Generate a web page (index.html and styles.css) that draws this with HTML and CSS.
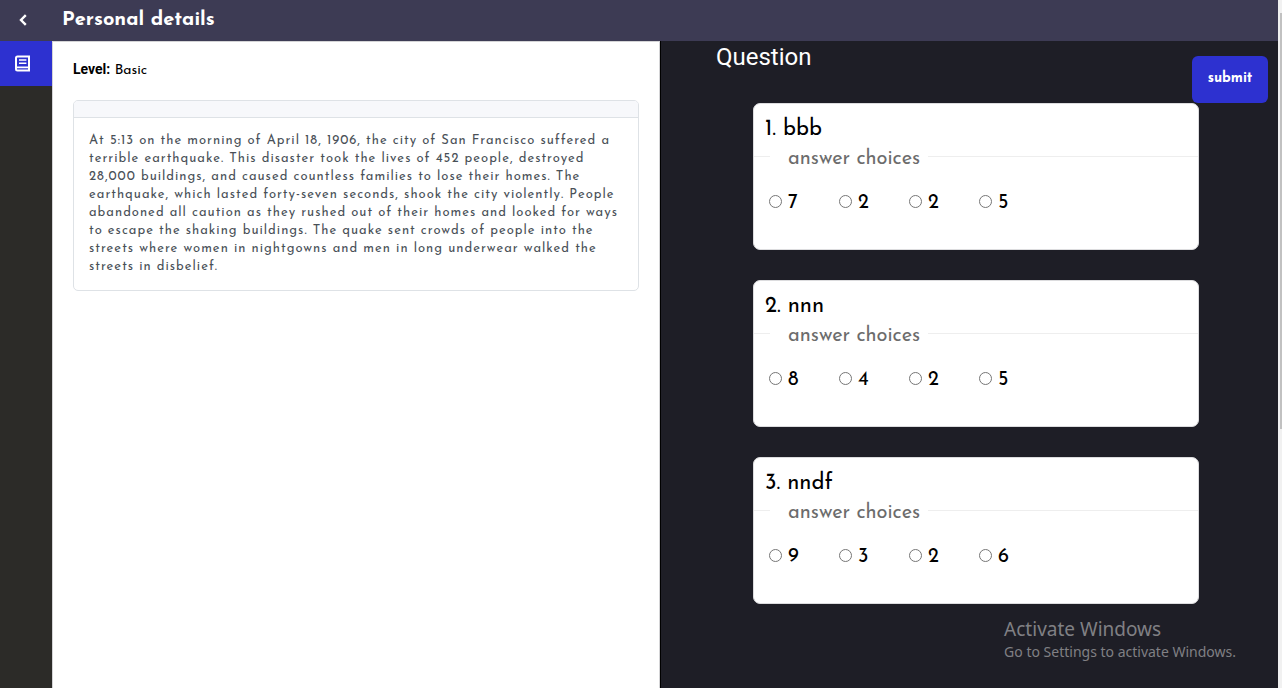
FILE: index.html
```html
<!DOCTYPE html>
<html lang="en">
<head>
<meta charset="utf-8">
<title>Personal details</title>
<link rel="stylesheet" href="styles.css">
</head>
<body>
<div class="window">
  <div class="app">
    <header class="topbar">
      <button class="back" type="button" aria-label="Back">
        <svg width="10" height="12" viewBox="0 0 10 12" fill="none" stroke="currentColor" stroke-width="2.4"><path d="M7.8 1.2 3 6l4.8 4.8"/></svg>
      </button>
      <h1 class="page-title">Personal details</h1>
    </header>
    <div class="content">
      <nav class="sidebar">
        <a class="nav-item" href="#" aria-label="Passage">
          <svg width="15" height="17" viewBox="0 0 15 17" fill="none" stroke="currentColor"><path stroke-width="2" d="M2.5 1.5H14v14H2.5q-1.5 0-1.5-1.5V3q0-1.5 1.5-1.5z"/><path stroke-width="1.6" d="M1.4 12.4H14M4 5h7.4M4 8.2h7.4"/></svg>
        </a>
      </nav>
      <main class="passage">
        <p class="level"><strong>Level:</strong> Basic</p>
        <article class="card">
          <div class="card-header"></div>
          <p class="card-text">At 5:13 on the morning of April 18, 1906, the city of San Francisco suffered a terrible earthquake. This disaster took the lives of 452 people, destroyed 28,000 buildings, and caused countless families to lose their homes. The earthquake, which lasted forty-seven seconds, shook the city violently. People abandoned all caution as they rushed out of their homes and looked for ways to escape the shaking buildings. The quake sent crowds of people into the streets where women in nightgowns and men in long underwear walked the streets in disbelief.</p>
        </article>
      </main>
      <form class="quiz">
        <div class="quiz-header">
          <h2 class="quiz-title">Question</h2>
          <button class="submit" type="button">submit</button>
        </div>
        <div class="questions">
          <section class="question">
            <h3 class="question-title">1. bbb</h3>
            <div class="divider"><span class="divider-label">answer choices</span></div>
            <div class="options">
              <label class="option"><input type="radio" name="q1"><span>7</span></label>
              <label class="option"><input type="radio" name="q1"><span>2</span></label>
              <label class="option"><input type="radio" name="q1"><span>2</span></label>
              <label class="option"><input type="radio" name="q1"><span>5</span></label>
            </div>
          </section>
          <section class="question">
            <h3 class="question-title">2. nnn</h3>
            <div class="divider"><span class="divider-label">answer choices</span></div>
            <div class="options">
              <label class="option"><input type="radio" name="q2"><span>8</span></label>
              <label class="option"><input type="radio" name="q2"><span>4</span></label>
              <label class="option"><input type="radio" name="q2"><span>2</span></label>
              <label class="option"><input type="radio" name="q2"><span>5</span></label>
            </div>
          </section>
          <section class="question">
            <h3 class="question-title">3. nndf</h3>
            <div class="divider"><span class="divider-label">answer choices</span></div>
            <div class="options">
              <label class="option"><input type="radio" name="q3"><span>9</span></label>
              <label class="option"><input type="radio" name="q3"><span>3</span></label>
              <label class="option"><input type="radio" name="q3"><span>2</span></label>
              <label class="option"><input type="radio" name="q3"><span>6</span></label>
            </div>
          </section>
        </div>
      </form>
    </div>
  </div>
  <div class="scroll-track"><div class="scroll-thumb"></div></div>
  <aside class="watermark">
    <p class="watermark-title">Activate Windows</p>
    <p class="watermark-text">Go to Settings to activate Windows.</p>
  </aside>
</div>
</body>
</html>
```
FILE: styles.css
```css
* { box-sizing: border-box; }
body, h1, h2, h3, p { margin: 0; }
body {
  font-family: "Josefin Sans", Lato, sans-serif;
  color: #000;
  background: #1e1e26;
}
.window { position: relative; display: flex; min-height: 100vh; }
.app { flex: 1; display: flex; flex-direction: column; }

.topbar {
  display: flex;
  align-items: center;
  height: 41px;
  padding: 0 16px 2px 0;
  color: #fff;
  background: #3d3b54;
}
.back {
  display: flex;
  justify-content: center;
  width: 46px;
  margin-right: 16px;
  padding: 0;
  border: 0;
  color: inherit;
  background: none;
}
.page-title { font-size: 20px; line-height: 24px; font-weight: 700; }

.content { flex: 1; display: grid; grid-template-columns: 52px 608fr 618fr; }
.sidebar { background: #2c2b28; }
.nav-item {
  display: flex;
  align-items: center;
  justify-content: center;
  height: 45px;
  padding-right: 8px;
  color: #fff;
  background: #2d31d0;
}

.passage {
  padding: 19px 20px 0;
  border: 1px solid #d4d4d6;
  border-width: 1px 1px 0 1px;
  background: #fff;
}
.level { font-size: 14px; line-height: 16px; margin-bottom: 21px; }
.level strong { font-family: Roboto, sans-serif; font-weight: 700; }
.card { border: 1px solid #dee2e6; border-radius: 5px; overflow: hidden; }
.card-header { height: 17px; border-bottom: 1px solid #dee2e6; background: #f7f8fb; }
.card-text {
  padding: 14px 15px;
  font-size: 13px;
  line-height: 18px;
  letter-spacing: 1px;
  color: #495057;
}

.quiz { border-left: 1px solid #000; background: #1e1e26; }
.quiz-header {
  display: flex;
  justify-content: space-between;
  align-items: flex-start;
  padding: 0 10px 0 55px;
}
.quiz-title {
  font: 400 24px/32px Roboto, sans-serif;
  color: #fff;
}
.submit {
  width: 76px;
  height: 47px;
  margin-top: 15px;
  padding: 0 0 2px;
  border: 0;
  border-radius: 6px;
  font: 700 14px/16px "Josefin Sans", Lato, sans-serif;
  color: #fff;
  background: #2d31d0;
}
.questions {
  display: flex;
  flex-direction: column;
  gap: 30px;
  margin: 0 79px 40px 92px;
}
.question {
  padding-bottom: 36px;
  border: 1px solid #dcdcde;
  border-radius: 7px;
  background: #fff;
}
.question-title { padding: 15px 11px 0; font-size: 22px; line-height: 22px; font-weight: 400; }
.divider { display: flex; align-items: center; height: 30px; color: #6c6c6c; }
.divider::before, .divider::after { content: ""; height: 1px; background: #eee; }
.divider::before { width: 16px; }
.divider::after { flex: 1; }
.divider-label { padding: 6px 8px 0 18px; font-size: 20px; line-height: 22px; }
.options { display: flex; padding: 18px 15px 0; }
.option {
  display: flex;
  align-items: center;
  gap: 6px;
  width: 70px;
  font-size: 20px;
  line-height: 20px;
}
.option input { width: 13px; height: 13px; margin: 0; }
.option span { padding-top: 4px; }

.scroll-track { width: 4px; padding: 13px 0 0 2px; background: #f1f1f1; }
.scroll-thumb { height: 416px; background: #c1c1c1; }

.watermark {
  position: absolute;
  right: 46px;
  bottom: 26px;
  font-family: "Segoe UI", "Noto Sans", sans-serif;
  color: #808084;
}
.watermark-title { font-size: 19px; line-height: 26px; }
.watermark-text { font-size: 14px; line-height: 20px; }
```
